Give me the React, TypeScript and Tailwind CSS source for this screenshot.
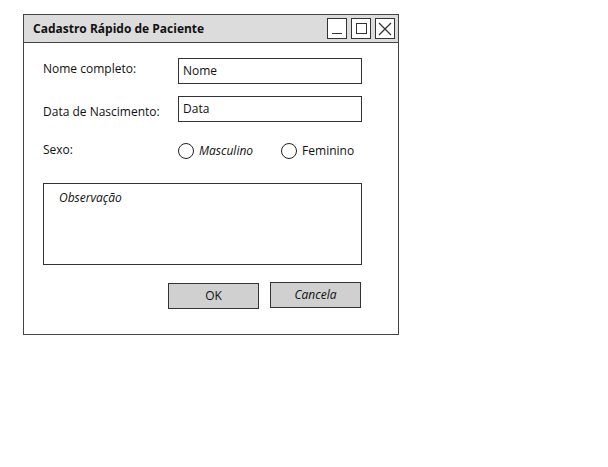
import React from 'react';

const Radio: React.FC<{ label: string; italic?: boolean }> = ({ label, italic }) => (
  <label className="flex items-center gap-[5px]">
    <span className="w-[16px] h-[16px] rounded-full border-[1.5px] border-[#222] bg-white" />
    <span className={italic ? 'italic text-[#111]' : 'text-[#111]'}>{label}</span>
  </label>
);

const WinButton: React.FC<{ children: React.ReactNode }> = ({ children }) => (
  <div className="w-[20px] h-[21px] border-[1.5px] border-[#333] bg-white flex items-center justify-center">
    {children}
  </div>
);

const App: React.FC = () => {
  return (
    <div
      className="w-[608px] h-[467px] bg-white text-[12px] text-[#111] pl-[23px] pt-[14px]"
      style={{ fontFamily: '"Open Sans", "DejaVu Sans", sans-serif' }}
    >
      <div className="w-[376px] h-[321px] border-[1.5px] border-[#444] flex flex-col">
        {/* title bar */}
        <div className="h-[28px] bg-[#dcdcdc] border-b-[1.5px] border-[#444] flex items-center justify-between pl-[9px] pr-[3px]">
          <span className="font-bold text-[12px]">Cadastro Rápido de Paciente</span>
          <div className="flex gap-[4px]">
            <WinButton>
              <span className="w-[10px] h-[1.5px] bg-[#333] mt-[10px]" />
            </WinButton>
            <WinButton>
              <span className="w-[11px] h-[11px] border-[1.5px] border-[#333]" />
            </WinButton>
            <WinButton>
              <svg width="16" height="16" viewBox="0 0 16 16">
                <path d="M2 2 L14 14 M14 2 L2 14" stroke="#333" strokeWidth="1.3" />
              </svg>
            </WinButton>
          </div>
        </div>

        {/* body */}
        <div className="flex flex-col pl-[19px] pt-[15px]">
          <div className="flex items-start h-[26px]">
            <span className="w-[135px] pt-[2px]">Nome completo:</span>
            <div className="w-[184px] h-[26px] border-[1.5px] border-[#333] flex items-center px-[4px]">Nome</div>
          </div>
          <div className="flex items-center h-[26px] mt-[12px]">
            <span className="w-[135px] pt-[6px]">Data de Nascimento:</span>
            <div className="w-[184px] h-[26px] border-[1.5px] border-[#333] flex items-start pt-[3px] px-[4px]">Data</div>
          </div>
          <div className="flex items-center h-[20px] mt-[19px]">
            <span className="w-[135px] -mt-[3px]">Sexo:</span>
            <div className="flex gap-[28px]">
              <Radio label="Masculino" italic />
              <Radio label="Feminino" />
            </div>
          </div>
          <div className="w-[319px] h-[82px] border-[1.5px] border-[#333] mt-[22px] pl-[15px] pt-[5px] italic">
            Observação
          </div>
          <div className="flex items-start gap-[11px] mt-[18px] ml-[125px]">
            <button className="w-[91px] h-[26px] bg-[#d0d0d0] border-[1.5px] border-[#333] text-[12px]">OK</button>
            <button className="w-[91px] h-[26px] -mt-[1px] bg-[#d0d0d0] border-[1.5px] border-[#333] text-[12px] italic">Cancela</button>
          </div>
        </div>
      </div>
    </div>
  );
};

export default App;
